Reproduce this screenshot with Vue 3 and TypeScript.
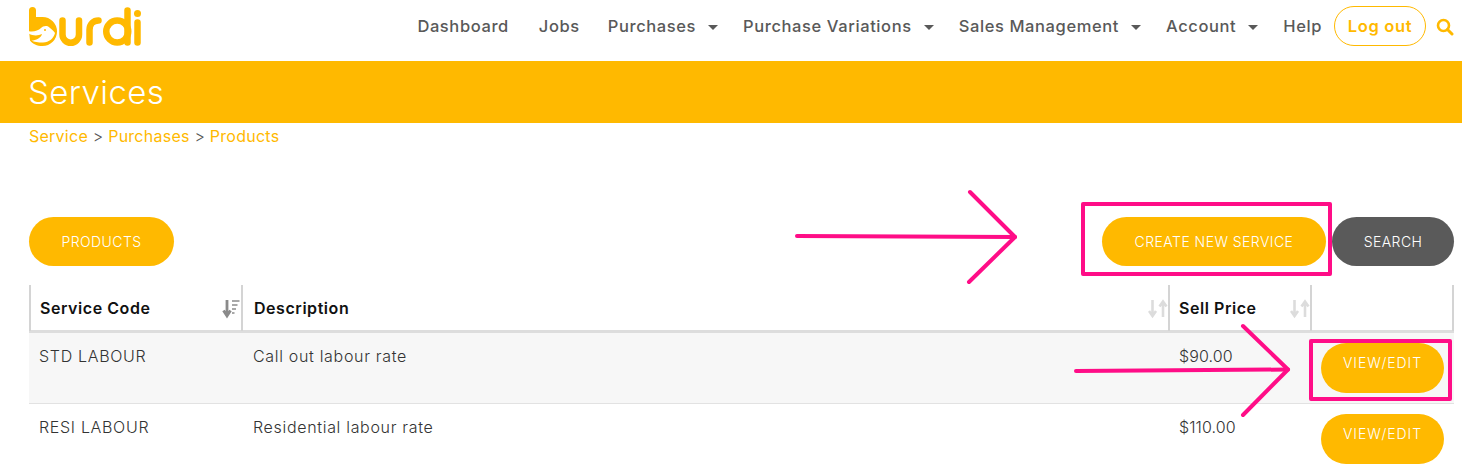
<script setup lang="ts">
interface NavItem { label: string; caret: boolean }
const nav: NavItem[] = [
  { label: 'Dashboard', caret: false },
  { label: 'Jobs', caret: false },
  { label: 'Purchases', caret: true },
  { label: 'Purchase Variations', caret: true },
  { label: 'Sales Management', caret: true },
  { label: 'Account', caret: true },
  { label: 'Help', caret: false },
]
const rows = [
  { code: 'STD LABOUR', desc: 'Call out labour rate', price: '$90.00' },
  { code: 'RESI LABOUR', desc: 'Residential labour rate', price: '$110.00' },
]
</script>

<template>
  <div class="page">
    <header class="top">
      <svg class="logo" width="114" height="40" viewBox="0 0 114 40" aria-label="burdi">
        <path d="M0 3.500a3.500 3.500 0 0 1 7 0V10H13.500a14.500 14.500 0 0 1 0 29C8 39 3.500 37 1 33.500L0 24Z" fill="#ffb900" />
        <path d="M-1 24C4 25 9 24 12 21C14 18.500 19 18 21 21C23 23 25 24 26 26C25 31 20 35.500 14 35.500C9 35.500 5 35 2.500 33.500C7 33.500 12 31 13 27C9 29 3 29 -1 26Z" fill="#fff" />
        <circle cx="16" cy="23" r="1" fill="#ffb900" />
        <g fill="none" stroke="#ffb900" stroke-width="6.500" stroke-linecap="round" stroke-linejoin="round">
          <path d="M33.500 13.500V27.500a8.250 8.250 0 0 0 16.500 0V13.500" />
          <path d="M60.500 35.500V23c0-6 4-9.500 9-9.500" />
          <circle cx="88.250" cy="24.500" r="11" />
          <path d="M98.500 3.500V35.500" />
          <path d="M108.500 15.500V35.500" />
        </g>
        <circle cx="108.500" cy="6.500" r="3.500" fill="#ffb900" />
      </svg>
      <nav class="nav">
        <a v-for="n in nav" :key="n.label" class="nav-item" :class="{ 'has-caret': n.caret }">
          {{ n.label }}<span v-if="n.caret" class="caret"></span>
        </a>
        <a class="logout">Log out</a>
        <svg class="search" width="18" height="18" viewBox="0 0 18 18">
          <circle cx="7.500" cy="7.500" r="5.500" fill="none" stroke="#ffb900" stroke-width="2.600" />
          <path d="M11.500 11.500l4.500 4.500" stroke="#ffb900" stroke-width="3" stroke-linecap="round" />
        </svg>
      </nav>
    </header>

    <div class="banner"><h1>Services</h1></div>

    <div class="crumbs">
      <a>Service</a> &gt; <a>Purchases</a> &gt; <a>Products</a>
    </div>

    <div class="actions">
      <button class="btn amber wide">PRODUCTS</button>
      <div class="actions-right">
        <button class="btn amber create">CREATE NEW SERVICE</button>
        <button class="btn dark">SEARCH</button>
      </div>
    </div>

    <div class="table">
      <div class="row head">
        <div class="cell">Service Code
          <svg class="sort" width="20" height="20" viewBox="0 0 20 20">
            <path d="M6 1v15M2.500 11.500L6 17l3.500-5.500" fill="none" stroke="#8a8a8a" stroke-width="2.800" />
            <path d="M11 2h7.500M11 6h5.500M11 10h4M11 14h2.500" stroke="#a8a8a8" stroke-width="2" />
          </svg>
        </div>
        <div class="cell">Description
          <svg class="sort" width="20" height="20" viewBox="0 0 20 20">
            <path d="M4.500 1v15M1 12L4.500 17l3.500-5M15 18V3M11.500 7.500L15 2.500l3.500 5" fill="none" stroke="#dcdcdc" stroke-width="2.600" />
          </svg>
        </div>
        <div class="cell">Sell Price
          <svg class="sort" width="20" height="20" viewBox="0 0 20 20">
            <path d="M4.500 1v15M1 12L4.500 17l3.500-5M15 18V3M11.500 7.500L15 2.500l3.500 5" fill="none" stroke="#dcdcdc" stroke-width="2.600" />
          </svg>
        </div>
        <div class="cell"></div>
      </div>
      <div v-for="(r, i) in rows" :key="r.code" class="row body" :class="{ odd: i === 0 }">
        <div class="cell">{{ r.code }}</div>
        <div class="cell desc">{{ r.desc }}</div>
        <div class="cell price">{{ r.price }}</div>
        <div class="cell act"><button class="btn amber view">VIEW/EDIT</button></div>
      </div>
    </div>

    <svg class="marks" width="1462" height="469" viewBox="0 0 1462 469" fill="none" stroke="#ff0d87" stroke-linecap="round" stroke-linejoin="round">
      <g stroke-width="4">
        <path d="M797 236L1015 237" />
        <path d="M970 192L1015 237L969 282" />
        <path d="M1076 371L1288 369.500" />
        <path d="M1243 326L1288 369.500L1243 415" />
      </g>
      <rect x="1083" y="204" width="247" height="70" stroke-width="4" stroke-linecap="butt" />
      <rect x="1311" y="341" width="139" height="58" stroke-width="4" stroke-linecap="butt" />
    </svg>
  </div>
</template>

<style>
html, body { margin: 0; background: #fff; overflow: hidden; }
</style>

<style scoped>
.page {
  position: relative;
  width: 1462px;
  height: 469px;
  overflow: hidden;
  font-family: Inter, "Liberation Sans", sans-serif;
  color: #555;
}
.top {
  height: 61px;
  display: flex;
  justify-content: space-between;
  padding: 0 8px 0 29px;
  box-sizing: border-box;
}
.logo { margin-top: 7px; }
.nav {
  display: flex;
  align-items: center;
  height: 51px;
}
.nav-item {
  font-size: 16.500px;
  font-weight: 500;
  letter-spacing: 0.6px;
  color: #595959;
  margin-left: 30px;
  white-space: nowrap;
}
.nav-item:nth-child(3) { margin-left: 28px; }
.nav-item.has-caret + .nav-item { margin-left: 25px; }
.caret {
  display: inline-block;
  width: 0;
  height: 0;
  margin-left: 12px;
  vertical-align: 2px;
  border-left: 5px solid transparent;
  border-right: 5px solid transparent;
  border-top: 5px solid #595959;
}
.logout {
  margin-left: 12px;
  width: 92px;
  height: 40px;
  box-sizing: border-box;
  border: 1px solid #ffb900;
  border-radius: 20px;
  display: flex;
  align-items: center;
  justify-content: center;
  color: #ffb900;
  font-size: 16.500px;
  font-weight: 600;
  letter-spacing: 0.7px;
}
.search { margin-left: 10px; margin-top: 3px; }
.banner {
  height: 62px;
  background: #ffb900;
  padding-left: 28px;
  display: flex;
  align-items: center;
}
.banner h1 {
  margin: 0;
  font-size: 33px;
  font-weight: 300;
  letter-spacing: 0.4px;
  color: #fff;
}
.crumbs {
  padding-left: 29px;
  font-size: 16px;
  line-height: 26px;
  font-weight: 300;
  letter-spacing: 0.25px;
  color: #555;
}
.crumbs a { color: #ffb900; font-weight: 400; }
.actions {
  margin-top: 68px;
  padding: 0 8px 0 29px;
  display: flex;
  justify-content: space-between;
}
.actions-right { display: flex; gap: 6px; }
.btn {
  border: 0;
  height: 49px;
  border-radius: 25px;
  color: #fff;
  font-family: inherit;
  font-size: 14px;
  font-weight: 300;
  letter-spacing: 0.45px;
  padding: 0;
}
.amber { background: #ffb900; }
.dark { background: #5a5a5a; width: 122px; }
.wide { width: 145px; }
.create { width: 224px; }
.table {
  margin: 19px 8px 0 29px;
}
.row {
  display: grid;
  grid-template-columns: 212px 927px 142px 144px;
}
.head {
  height: 48px;
  border-bottom: 3px solid #ddd;
  box-sizing: border-box;
}
.head .cell {
  position: relative;
  border-left: 2px solid #d4d4d4;
  padding-left: 9px;
  font-weight: 600;
  font-size: 16px;
  letter-spacing: 0.55px;
  color: #111;
  line-height: 46px;
}
.head .cell:nth-child(2) { padding-left: 11px; }
.head .cell:last-child { border-right: 2px solid #d4d4d4; }
.sort { position: absolute; right: 0; top: 14px; }
.body {
  height: 71px;
  box-sizing: border-box;
  border-bottom: 1px solid #e2e2e2;
  font-size: 16px;
  font-weight: 300;
  letter-spacing: 0.68px;
  color: #333;
}
.body:last-child { border-bottom: 0; }
.odd { background: #f7f7f7; }
.body .cell { padding: 10px 0 0 10px; line-height: 26px; }
.body .desc { padding-left: 12px; }
.body .price { padding-left: 11px; letter-spacing: 0.1px; }
.act.cell { padding: 10px 0 0 11px; }
.view { width: 123px; height: 50px; display: block; padding-bottom: 12px; letter-spacing: 0.9px; }
.marks { position: absolute; left: 0; top: 0; pointer-events: none; }
</style>
